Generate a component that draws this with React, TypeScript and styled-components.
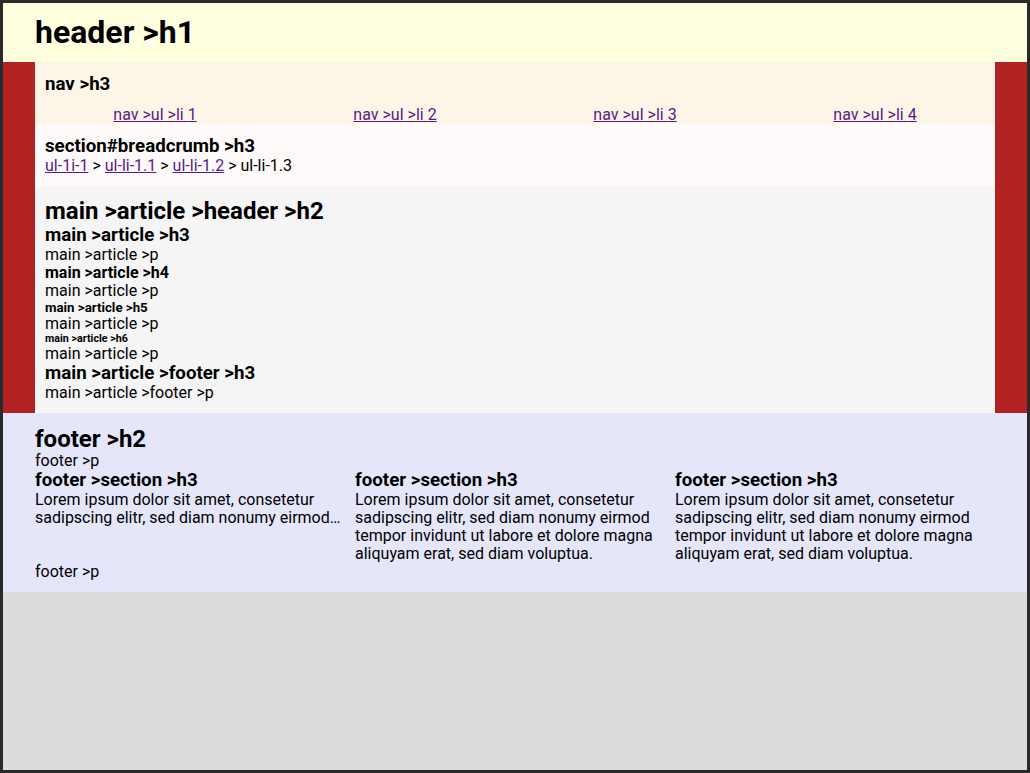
import React from "react";
import styled, { createGlobalStyle } from "styled-components";

const Global = createGlobalStyle`
  html, body { margin: 0; padding: 0; }
  body {
    font-family: Roboto, "Liberation Sans", sans-serif;
    font-size: 16px;
    color: #000;
    background: #dcdcdc;
  }
  #root { min-height: 100vh; }
  * { box-sizing: border-box; }
`;

const Page = styled.div`
  min-height: 773px;
  border: 3px solid #2a2a2a;
  background: #dcdcdc;
  display: flex;
  flex-direction: column;
`;

const Inner = styled.div`
  width: 960px;
  margin: 0 auto;
`;

const TopHeader = styled.header`
  background: #ffffe0;
  padding: 12px 0 12px;
`;

const H1 = styled.h1`
  margin: 0;
  font-size: 32px;
  font-weight: 700;
  line-height: 35px;
`;

const Band = styled.div`
  background: #b22222;
`;

const BandInner = styled(Inner)`
  display: flex;
  flex-direction: column;
`;

const Nav = styled.nav`
  background: #fdf5e6;
  padding: 12px 10px 0;
`;

const H3 = styled.h3`
  margin: 0;
  font-size: 18.72px;
  font-weight: 700;
  line-height: 21px;
`;

const NavList = styled.ul`
  list-style: none;
  margin: 11px -10px 0;
  padding: 0;
  display: grid;
  grid-template-columns: repeat(4, 1fr);
`;

const NavItem = styled.li`
  text-align: center;
  line-height: 18px;
`;

const Link = styled.a`
  color: #551a8b;
  text-decoration: underline;
`;

const Breadcrumb = styled.section`
  background: #fffafa;
  padding: 12px 10px 11px;
`;

const Crumbs = styled.div`
  line-height: 18px;
`;

const Main = styled.main`
  background: #f5f5f5;
  padding: 12px 10px 11px;
`;

const H2 = styled.h2<{ $tall?: boolean }>`
  margin: 0;
  font-size: 24px;
  font-weight: 700;
  line-height: ${(p) => (p.$tall ? "27px" : "26px")};
`;

const H4 = styled.h4`
  margin: 0;
  font-size: 16px;
  font-weight: 700;
  line-height: 18px;
`;

const H5 = styled.h5`
  margin: 0;
  font-size: 13.28px;
  font-weight: 700;
  line-height: 15px;
`;

const H6 = styled.h6`
  margin: 0;
  font-size: 10.72px;
  font-weight: 700;
  line-height: 12px;
`;

const P = styled.p`
  margin: 0;
  line-height: 18px;
`;

const Footer = styled.footer`
  background: #e6e6fa;
  padding: 13px 0 11px;
`;

const Columns = styled.div`
  display: grid;
  grid-template-columns: repeat(3, 1fr);
`;

const Column = styled.section`
  padding-right: 10px;
`;

const Clamp = styled(P)`
  display: -webkit-box;
  -webkit-line-clamp: 2;
  -webkit-box-orient: vertical;
  overflow: hidden;
`;

const lorem =
  "Lorem ipsum dolor sit amet, consetetur sadipscing elitr, sed diam nonumy eirmod tempor invidunt ut labore et dolore magna aliquyam erat, sed diam voluptua.";

export default function App() {
  return (
    <>
      <Global />
      <Page>
        <TopHeader>
          <Inner>
            <H1>header &gt;h1</H1>
          </Inner>
        </TopHeader>
        <Band>
          <BandInner>
            <Nav>
              <H3>nav &gt;h3</H3>
              <NavList>
                {[1, 2, 3, 4].map((n) => (
                  <NavItem key={n}>
                    <Link href="#">nav &gt;ul &gt;li {n}</Link>
                  </NavItem>
                ))}
              </NavList>
            </Nav>
            <Breadcrumb id="breadcrumb">
              <H3>section#breadcrumb &gt;h3</H3>
              <Crumbs>
                <Link href="#">ul-1i-1</Link> &gt; <Link href="#">ul-li-1.1</Link> &gt;{" "}
                <Link href="#">ul-li-1.2</Link> &gt; ul-li-1.3
              </Crumbs>
            </Breadcrumb>
            <Main>
              <article>
                <header>
                  <H2 $tall>main &gt;article &gt;header &gt;h2</H2>
                </header>
                <H3>main &gt;article &gt;h3</H3>
                <P>main &gt;article &gt;p</P>
                <H4>main &gt;article &gt;h4</H4>
                <P>main &gt;article &gt;p</P>
                <H5>main &gt;article &gt;h5</H5>
                <P>main &gt;article &gt;p</P>
                <H6>main &gt;article &gt;h6</H6>
                <P>main &gt;article &gt;p</P>
                <footer>
                  <H3>main &gt;article &gt;footer &gt;h3</H3>
                  <P>main &gt;article &gt;footer &gt;p</P>
                </footer>
              </article>
            </Main>
          </BandInner>
        </Band>
        <Footer>
          <Inner>
            <H2>footer &gt;h2</H2>
            <P>footer &gt;p</P>
            <Columns>
              <Column>
                <H3>footer &gt;section &gt;h3</H3>
                <Clamp>{lorem}</Clamp>
              </Column>
              <Column>
                <H3>footer &gt;section &gt;h3</H3>
                <P>{lorem}</P>
              </Column>
              <Column>
                <H3>footer &gt;section &gt;h3</H3>
                <P>{lorem}</P>
              </Column>
            </Columns>
            <P>footer &gt;p</P>
          </Inner>
        </Footer>
      </Page>
    </>
  );
}
